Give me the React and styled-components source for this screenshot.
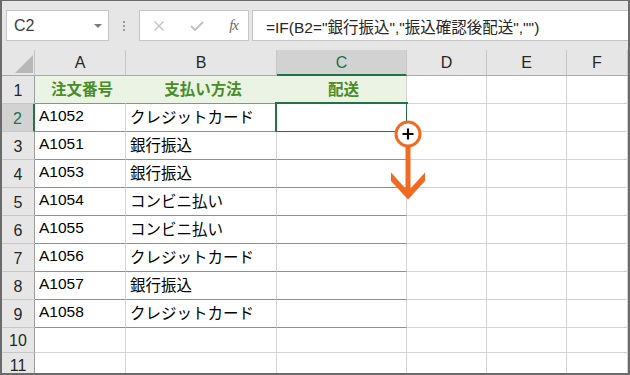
import React from "react";
import styled, { createGlobalStyle } from "styled-components";

const GlobalStyle = createGlobalStyle`
    body {
        margin: 0;
        background: #ffffff;
        font-family: "Liberation Sans", "Noto Sans CJK JP", sans-serif;
    }
`;

const FONT = `"Liberation Sans", "Noto Sans CJK JP", sans-serif`;
const GRID = "#d4d4d4";
const ACCENT = "#70ad47";
const SELECT = "#217346";

const Frame = styled.div`
    position: relative;
    box-sizing: border-box;
    width: 630px;
    height: 375px;
    overflow: hidden;
    border: 2px solid #6b6b6b;
    border-top-width: 1px;
    background: #e6e6e6;
    font-family: ${FONT};
`;

const Toolbar = styled.div`
    display: flex;
    align-items: flex-start;
    height: 49px;
    box-sizing: border-box;
    padding: 9px 0 0 4px;
`;

const Box = styled.div`
    box-sizing: border-box;
    height: 31px;
    background: #ffffff;
    border: 1px solid #c6c6c6;
    display: flex;
    align-items: center;
`;

const NameBox = styled(Box)`
    width: 103px;
    padding: 0 6px 0 7px;
    justify-content: space-between;
    font-size: 16px;
    color: #3c3c3c;
`;

const Caret = styled.span`
    width: 0;
    height: 0;
    border-left: 4px solid transparent;
    border-right: 4px solid transparent;
    border-top: 4px solid #7a7a7a;
`;

const Dots = styled.div`
    width: 30px;
    height: 31px;
    display: flex;
    flex-direction: column;
    align-items: center;
    justify-content: center;
    gap: 2px;

    span {
        width: 2px;
        height: 2px;
        background: #9a9a9a;
    }
`;

const ButtonBox = styled(Box)`
    width: 110px;
    padding: 0 10px 0 13px;
    justify-content: space-between;
`;

const Fx = styled.span`
    font-family: "Liberation Serif", "DejaVu Serif", serif;
    font-style: italic;
    font-size: 15px;
    color: #6a6a6a;
    letter-spacing: -1px;
`;

const FormulaBox = styled(Box)`
    flex: 1;
    margin-left: 3px;
    margin-right: -2px;
    padding-left: 13px;
    font-size: 15.5px;
    color: #262626;
    white-space: nowrap;
`;

const Sheet = styled.div`
    display: grid;
    grid-template-columns: 33px 91px 151px 130px 80px 80px 1fr;
    grid-template-rows: 26px repeat(9, 28px) 25px 25px;
    background: #ffffff;
`;

const Corner = styled.div`
    box-sizing: border-box;
    background: #e6e6e6;
    border-right: 1px solid #c6c6c6;
    border-bottom: 1px solid #ababab;
    display: flex;
    align-items: flex-end;
    justify-content: flex-end;
    padding: 0 1px 2px 0;
`;

const ColHead = styled.div`
    box-sizing: border-box;
    background: ${(p) => (p.$selected ? "#d2d2d2" : "#e6e6e6")};
    border-right: 1px solid #c6c6c6;
    border-bottom: ${(p) => (p.$selected ? `2px solid ${SELECT}` : "1px solid #ababab")};
    display: flex;
    align-items: center;
    justify-content: center;
    font-size: 16px;
    color: ${(p) => (p.$selected ? SELECT : "#262626")};
    padding-top: ${(p) => (p.$selected ? "1px" : "0")};
`;

const RowHead = styled.div`
    box-sizing: border-box;
    background: ${(p) => (p.$selected ? "#d2d2d2" : "#e6e6e6")};
    border-right: ${(p) => (p.$selected ? `2px solid ${SELECT}` : "1px solid #9e9e9e")};
    border-bottom: 1px solid #c8c8c8;
    display: flex;
    align-items: center;
    justify-content: center;
    font-size: 16px;
    color: ${(p) => (p.$selected ? SELECT : "#262626")};
    padding-top: 2px;
`;

const Cell = styled.div`
    position: relative;
    box-sizing: border-box;
    display: flex;
    align-items: center;
    justify-content: ${(p) => (p.$title ? "center" : "flex-start")};
    padding: 0 0 3px 4px;
    font-size: 15.5px;
    font-weight: ${(p) => (p.$title ? 700 : 400)};
    color: ${(p) => (p.$title ? "#4a8d28" : "#000000")};
    background: ${(p) => (p.$title ? "#ebf4e4" : "#ffffff")};
    border-right: 1px solid ${(p) => (p.$title && !p.$edge ? "#ebf4e4" : GRID)};
    border-bottom: 1px solid ${(p) => (p.$green ? ACCENT : GRID)};
    white-space: nowrap;

    ${(p) =>
        p.$active &&
        `
        &::after {
            content: "";
            position: absolute;
            top: -2px;
            left: -2px;
            right: -2px;
            bottom: -2px;
            border: 2px solid ${SELECT};
        }
    `}
`;

const Marker = styled.svg`
    position: absolute;
    left: 380px;
    top: 110px;
    width: 50px;
    height: 95px;
    overflow: visible;
`;

const columns = ["A", "B", "C", "D", "E", "F"];

const orders = [
    ["A1052", "クレジットカード"],
    ["A1051", "銀行振込"],
    ["A1053", "銀行振込"],
    ["A1054", "コンビニ払い"],
    ["A1055", "コンビニ払い"],
    ["A1056", "クレジットカード"],
    ["A1057", "銀行振込"],
    ["A1058", "クレジットカード"],
];

const App = () => {
    return (
        <>
            <GlobalStyle />
            <Frame>
                <Toolbar>
                    <NameBox>
                        C2
                        <Caret />
                    </NameBox>
                    <Dots>
                        <span />
                        <span />
                        <span />
                    </Dots>
                    <ButtonBox>
                        <svg width="12" height="10" viewBox="0 0 12 10">
                            <path d="M1.5 0.5 L10.5 9.5 M10.5 0.5 L1.5 9.5" stroke="#c2c2c2" strokeWidth="1.4" fill="none" />
                        </svg>
                        <svg width="14" height="10" viewBox="0 0 14 10">
                            <path d="M1 5 L5 9 L13 1" stroke="#c2c2c2" strokeWidth="2" fill="none" />
                        </svg>
                        <Fx>fx</Fx>
                    </ButtonBox>
                    <FormulaBox>=IF(B2="銀行振込","振込確認後配送","")</FormulaBox>
                </Toolbar>

                <Sheet>
                    <Corner>
                        <svg width="18" height="18" viewBox="0 0 18 18">
                            <path d="M0 18 L18 0 L18 18 Z" fill="#b8b8b8" />
                        </svg>
                    </Corner>
                    {columns.map((c) => (
                        <ColHead key={c} $selected={c === "C"}>
                            {c}
                        </ColHead>
                    ))}

                    <RowHead>1</RowHead>
                    <Cell $title $green>注文番号</Cell>
                    <Cell $title $green>支払い方法</Cell>
                    <Cell $title $green $edge>配送</Cell>
                    <Cell />
                    <Cell />
                    <Cell />

                    {orders.map(([id, method], i) => (
                        <React.Fragment key={id}>
                            <RowHead $selected={i === 0}>{i + 2}</RowHead>
                            <Cell $green>{id}</Cell>
                            <Cell $green>{method}</Cell>
                            <Cell $green $active={i === 0} />
                            <Cell />
                            <Cell />
                            <Cell />
                        </React.Fragment>
                    ))}

                    {[10, 11].map((n) => (
                        <React.Fragment key={n}>
                            <RowHead>{n}</RowHead>
                            <Cell />
                            <Cell />
                            <Cell />
                            <Cell />
                            <Cell />
                            <Cell />
                        </React.Fragment>
                    ))}
                </Sheet>

                <Marker viewBox="380 110 50 95">
                    <circle cx="406" cy="133" r="12" fill="#ffffff" stroke="#f26a22" strokeWidth="3" />
                    <path d="M406 127.5 V138.5 M400.5 133 H411.5" stroke="#000000" strokeWidth="2.2" />
                    <path
                        d="M403.5 146 H408.5 V187.5 L423 171.5 V180 L406 198.5 L389 180 V171.5 L403.5 187.5 Z"
                        fill="#f26a22"
                    />
                </Marker>
            </Frame>
        </>
    );
};

export default App;
